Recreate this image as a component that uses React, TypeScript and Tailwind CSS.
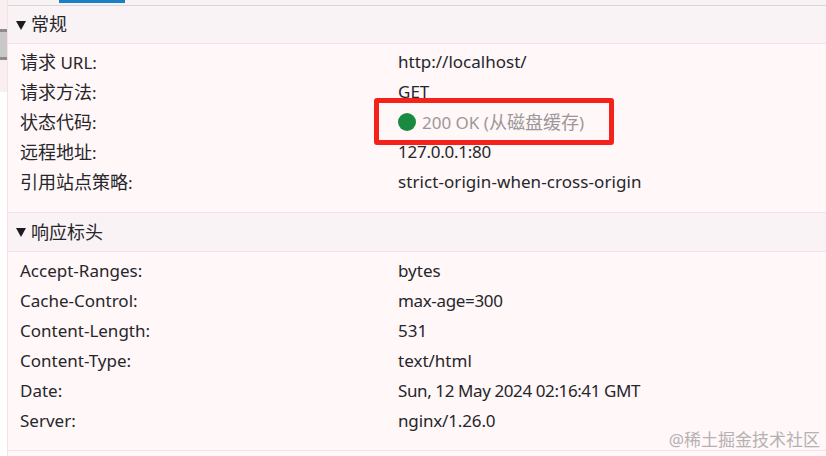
const font = { fontFamily: '"Noto Sans", "Noto Sans CJK SC", sans-serif' };

interface Row {
  name: string;
  value: string;
  // digits run narrower in the original font
  tight?: string;
}

const general: Row[] = [
  { name: "请求 URL:", value: "http://localhost/" },
  { name: "请求方法:", value: "GET" },
  { name: "状态代码:", value: "" },
  { name: "远程地址:", value: "127.0.0.1:80", tight: "tracking-[-0.25px]" },
  { name: "引用站点策略:", value: "strict-origin-when-cross-origin", tight: "tracking-[0.07px]" },
];

const headers: Row[] = [
  { name: "Accept-Ranges:", value: "bytes" },
  { name: "Cache-Control:", value: "max-age=300", tight: "tracking-[-0.35px]" },
  { name: "Content-Length:", value: "531" },
  { name: "Content-Type:", value: "text/html" },
  { name: "Date:", value: "Sun, 12 May 2024 02:16:41 GMT", tight: "tracking-[-0.4px]" },
  { name: "Server:", value: "nginx/1.26.0", tight: "tracking-[-0.15px]" },
];

// Chinese runs sit a little larger than the Latin text in the original
function Mixed({ text }: { text: string }) {
  return (
    <>
      {text.split(/([\u4e00-\u9fff]+)/).map((part, i) =>
        /[\u4e00-\u9fff]/.test(part) ? (
          <span key={i} className="text-[18px]">
            {part}
          </span>
        ) : (
          <span key={i}>{part}</span>
        ),
      )}
    </>
  );
}

function SectionHeader({ title, height }: { title: string; height: string }) {
  return (
    <div className={`flex ${height} items-center gap-[5px] border-b border-[#f7e1e6] bg-[#f9f3f5] pl-[8px] text-[18px] text-[#26262b]`}>
      <svg width="10" height="9" viewBox="0 0 10 9" className="mt-[1px] shrink-0">
        <path d="M0 0h10L5 9z" fill="#1c1c20" />
      </svg>
      <span>{title}</span>
    </div>
  );
}

function Rows({ rows, padding }: { rows: Row[]; padding: string }) {
  return (
    <div className={padding}>
      {rows.map((row) => (
        <div key={row.name} className="flex h-[30px] items-center pl-[12px] text-[17px] text-[#26262b]">
          <div className="w-[378px] shrink-0">
            <Mixed text={row.name} />
          </div>
          {row.value ? (
            <div className={row.tight}>{row.value}</div>
          ) : (
            <div className="flex items-center gap-[6px] text-[#9c9799]">
              <span className="h-[18px] w-[18px] rounded-full bg-[#1b8a41]" />
              <span>
                <Mixed text="200 OK (从磁盘缓存)" />
              </span>
            </div>
          )}
        </div>
      ))}
    </div>
  );
}

export default function App() {
  return (
    <div style={font} className="relative flex h-[456px] w-[826px] overflow-hidden bg-white">
      {/* Sliver of the left pane */}
      <div className="flex w-[7px] shrink-0 flex-col bg-[#f9eff1]">
        <div className="mt-[29px] h-[3px] bg-[#8c8c8c]" />
        <div className="h-[25px] bg-[#c8c8c8]" />
        <div className="h-[3px] bg-[#8c8c8c]" />
        <div className="mt-[32px] flex-1 bg-white" />
      </div>
      <div className="flex min-w-0 flex-1 flex-col border-l border-[#f7e1e6] bg-[#fff7f8]">
        <div className="flex h-[6px] shrink-0 border-b border-[#d9d6d7] bg-[#f7f3f4] pl-[51px]">
          <div className="h-[3px] w-[66px] bg-[#1a7fc4]" />
        </div>
        <SectionHeader title="常规" height="h-[38px]" />
        <Rows rows={general} padding="pt-[3px] pb-[15px]" />
        <div className="border-t border-[#f7e1e6]" />
        <SectionHeader title="响应标头" height="h-[39px]" />
        <Rows rows={headers} padding="pt-[4px] pb-[14px]" />
        <div className="border-t border-[#f7e1e6]" />
      </div>
      {/* Red annotation box */}
      <div className="absolute left-[374px] top-[98px] h-[47px] w-[240px] rounded-[3px] border-[5px] border-[#f5221b]" />
      {/* Watermark */}
      <div className="absolute right-[6px] top-[428px] text-[17px] leading-[24px] text-[#b5b1b3]">@稀土掘金技术社区</div>
    </div>
  );
}
